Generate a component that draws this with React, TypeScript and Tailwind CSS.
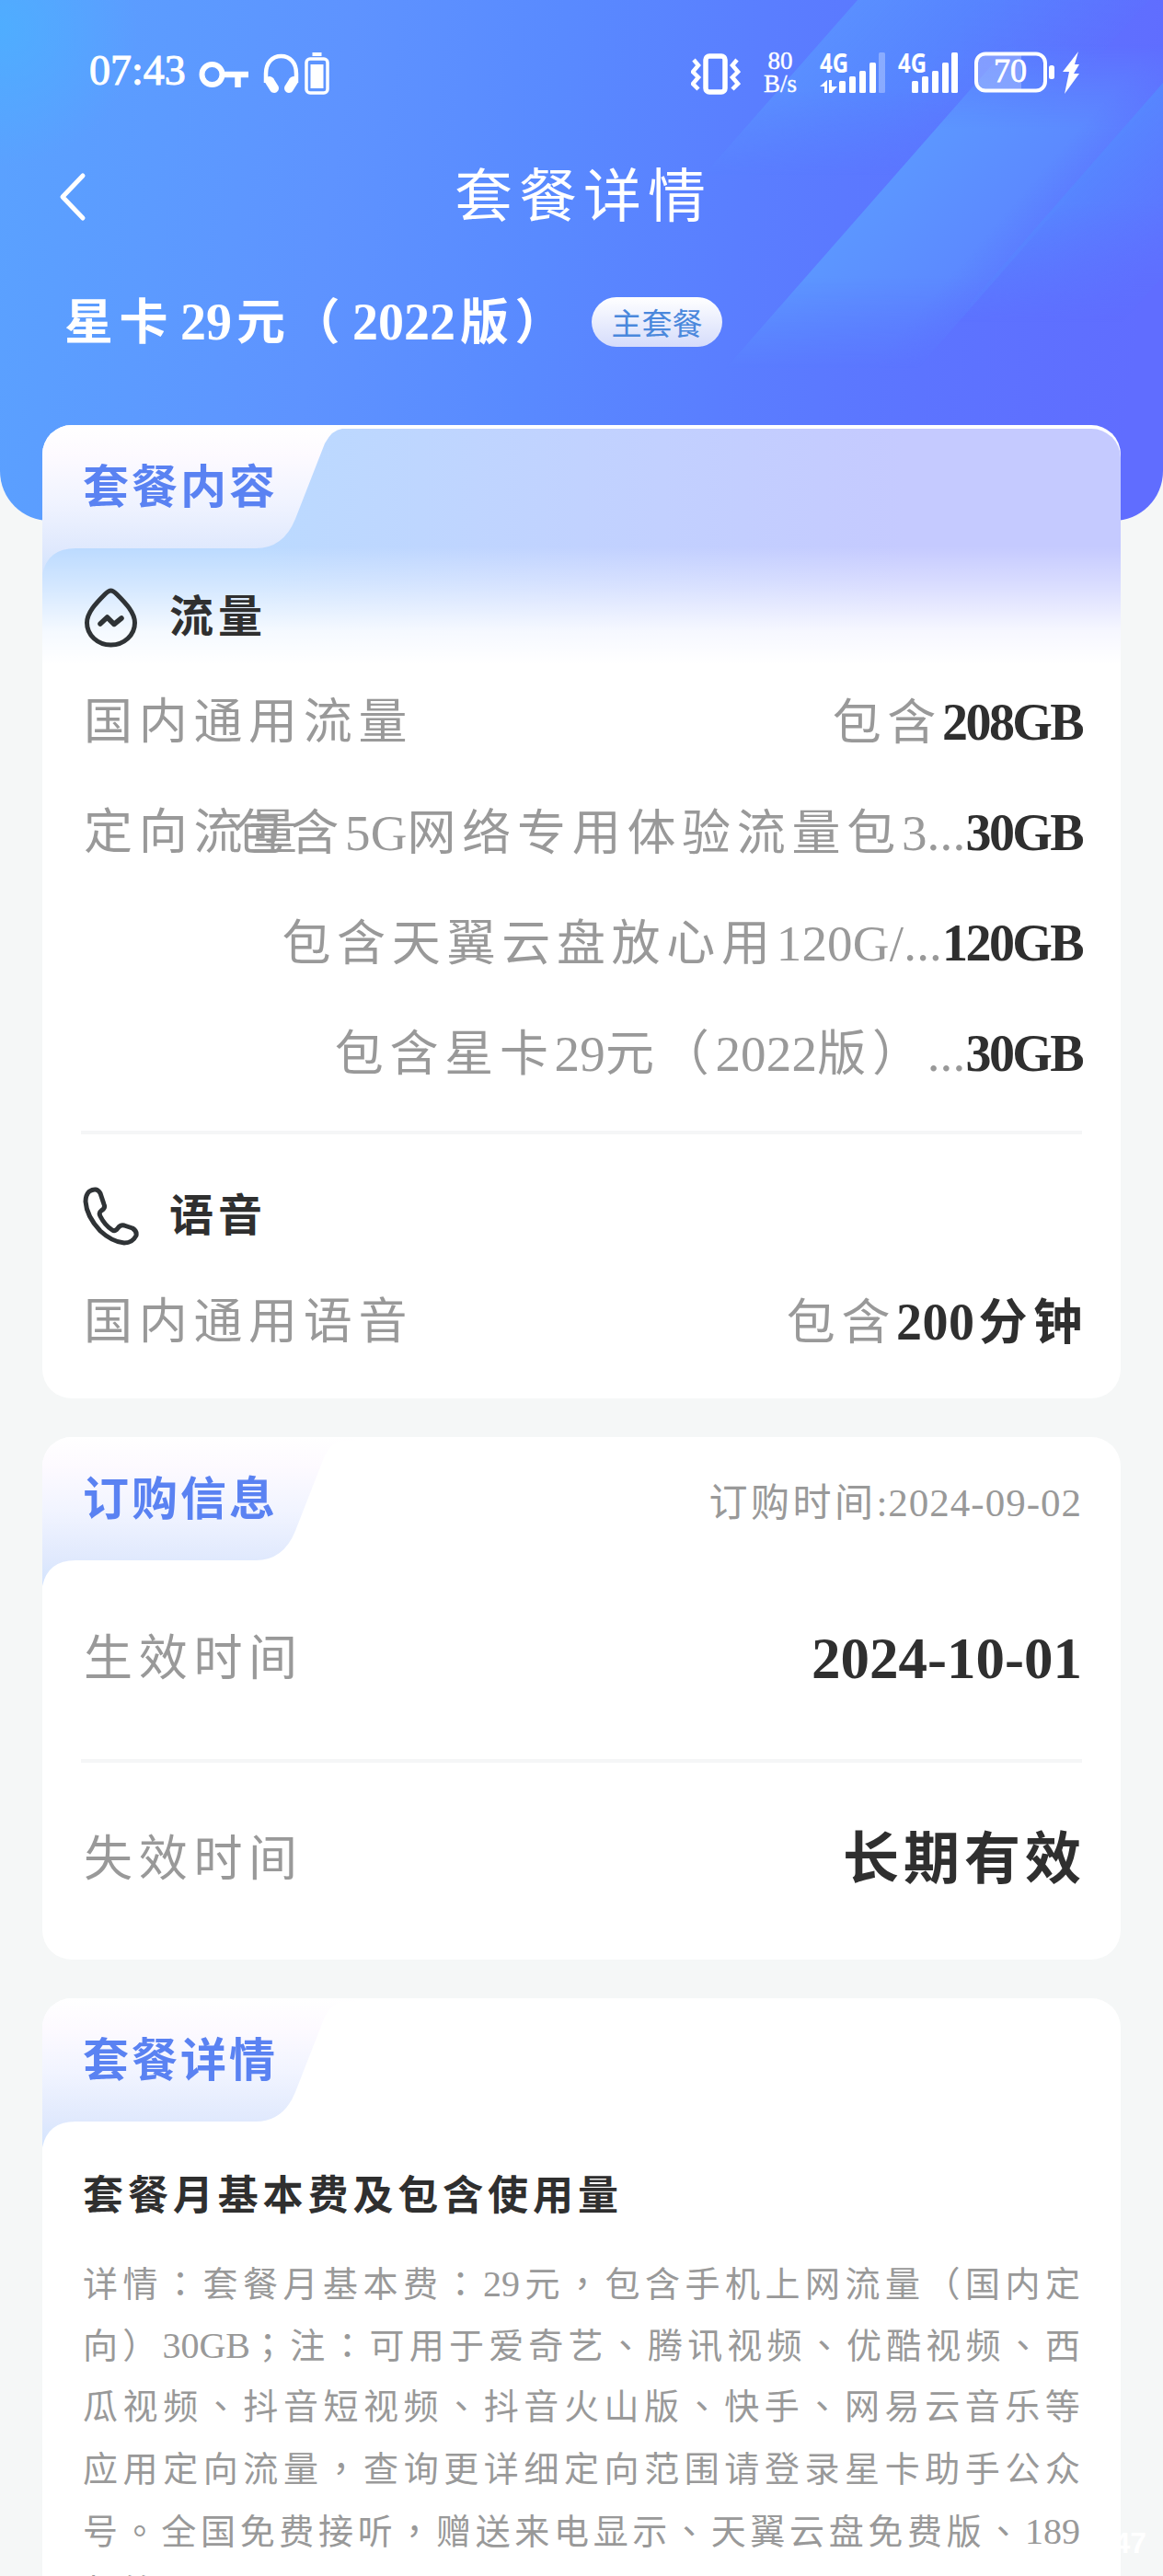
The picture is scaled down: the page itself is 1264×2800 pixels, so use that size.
import { Fragment, ReactNode } from "react"

// Latin runs are set slightly larger and tighter than the Chinese around them,
// and full-width punctuation sits in the middle of its cell
function Mixed({ children, latin = "" }: { children: string; latin?: string }) {
    const parts = children.split(/([\x20-\x7e]+|[，。、：；]+)/).filter(Boolean)
    return (
        <>
            {parts.map((part, i) => {
                if (/^[\x20-\x7e]+$/.test(part)) return <span key={i} className={latin}>{part}</span>
                if (/^[，。、：；]+$/.test(part)) return <span key={i} lang="zh-TW" className="font-['Noto_Sans_CJK_TC',sans-serif] leading-none">{part}</span>
                return <Fragment key={i}>{part}</Fragment>
            })}
        </>
    )
}

function HeaderArt() {
    return (
        <svg className="absolute inset-0 h-full w-full" viewBox="0 0 1264 566" preserveAspectRatio="none">
            <defs>
                <linearGradient id="base" x1="0" y1="0" x2="1264" y2="160" gradientUnits="userSpaceOnUse">
                    <stop offset="0" stopColor="#5aa2ff" />
                    <stop offset="0.3" stopColor="#5e93ff" />
                    <stop offset="0.48" stopColor="#598aff" />
                    <stop offset="0.65" stopColor="#5a7eff" />
                    <stop offset="0.82" stopColor="#5c74ff" />
                    <stop offset="1" stopColor="#606dff" />
                </linearGradient>
                <radialGradient id="corner" cx="0" cy="30" r="150" gradientUnits="userSpaceOnUse">
                    <stop offset="0" stopColor="#4cb0ff" stopOpacity="0.8" />
                    <stop offset="1" stopColor="#4cb0ff" stopOpacity="0" />
                </radialGradient>
                <linearGradient id="beam1" x1="870" y1="70" x2="1060" y2="237" gradientUnits="userSpaceOnUse">
                    <stop offset="0" stopColor="#5a8fff" />
                    <stop offset="0.4" stopColor="#5688ff" stopOpacity="0.8" />
                    <stop offset="1" stopColor="#5880ff" stopOpacity="0" />
                </linearGradient>
                <linearGradient id="beam2" x1="930" y1="240" x2="1090" y2="380" gradientUnits="userSpaceOnUse">
                    <stop offset="0" stopColor="#5c96ff" />
                    <stop offset="0.55" stopColor="#5c8aff" />
                    <stop offset="1" stopColor="#5a80ff" stopOpacity="0" />
                </linearGradient>
                <linearGradient id="beam3" x1="1150" y1="200" x2="1250" y2="290" gradientUnits="userSpaceOnUse">
                    <stop offset="0" stopColor="#5688ff" />
                    <stop offset="1" stopColor="#5a7cff" stopOpacity="0.5" />
                </linearGradient>
                <linearGradient id="fadeDown" x1="0" y1="0" x2="0" y2="1">
                    <stop offset="0.5" stopColor="#fff" />
                    <stop offset="1" stopColor="#000" />
                </linearGradient>
                <linearGradient id="fadeBoth" x1="0" y1="0" x2="0" y2="1">
                    <stop offset="0.12" stopColor="#000" />
                    <stop offset="0.35" stopColor="#fff" />
                    <stop offset="0.75" stopColor="#fff" />
                    <stop offset="1" stopColor="#000" />
                </linearGradient>
                <mask id="beam1Mask">
                    <rect x="700" y="0" width="564" height="190" fill="url(#fadeDown)" />
                </mask>
                <mask id="beam2Mask">
                    <rect x="700" y="0" width="564" height="400" fill="url(#fadeBoth)" />
                </mask>
                <mask id="beam3Mask">
                    <rect x="900" y="90" width="364" height="260" fill="url(#fadeDown)" />
                </mask>
            </defs>
            <rect width="1264" height="566" fill="url(#base)" />
            <rect width="300" height="260" fill="url(#corner)" />
            <path d="M932 0H1249L1082 190H765Z" fill="url(#beam1)" mask="url(#beam1Mask)" />
            <path d="M1140 0H1264V96L998 400H789Z" fill="url(#beam2)" mask="url(#beam2Mask)" />
            <path d="M1264 90V300L1220 350H1036Z" fill="url(#beam3)" mask="url(#beam3Mask)" />
        </svg>
    )
}

function StatusBar() {
    return (
        <div className="flex h-[160px] items-start justify-between pl-[97px] pr-[90px] pt-[54px] text-white">
            <div className="flex items-center">
                <span className="relative -top-[2px] w-[119px] text-[46px] leading-[44px] [-webkit-text-stroke:1px_white]">07:43</span>
                <svg className="h-[50px] w-[146px]" viewBox="216 54 146 50" fill="none" stroke="white">
                    <ellipse cx="230.500" cy="81" rx="11" ry="11" strokeWidth="6" />
                    <path d="M242 81H270M258.500 81V95" strokeWidth="6.500" />
                    <path d="M289 90V80C289 68 296 61 305.500 61S322 68 322 80V90" strokeWidth="4.500" />
                    <path d="M293 88L298 96" strokeWidth="10" strokeLinecap="round" />
                    <path d="M319 88L314 96" strokeWidth="10" strokeLinecap="round" />
                    <rect x="333" y="64" width="23" height="37" rx="4" strokeWidth="3.500" />
                    <rect x="337.500" y="70" width="14" height="26" fill="white" stroke="none" />
                    <rect x="339.500" y="57" width="10" height="4" fill="white" stroke="none" />
                </svg>
            </div>
            <div className="flex items-start">
                <svg className="h-[50px] w-[54px]" viewBox="752 54 54 50" fill="none" stroke="white">
                    <rect x="768" y="61" width="21" height="39" rx="4" strokeWidth="5.500" />
                    <path d="M755 65L760 71L754 78L760 84L754 91L760 97" strokeWidth="4.500" />
                    <path d="M802 65L797 71L803 78L797 84L803 91L797 97" strokeWidth="4.500" />
                </svg>
                <div className="ml-[24px] mr-[23px] w-[38px] text-center text-[27px] leading-[25px] [-webkit-text-stroke:0.4px_white]">
                    <div>80</div>
                    <div>B/s</div>
                </div>
                <svg className="h-[50px] w-[284px] overflow-visible" viewBox="890 54 284 50" fill="white">
                    <text x="891" y="79" fontSize="28" fontWeight="700" fontFamily="Open Sans, sans-serif" textLength="31" lengthAdjust="spacingAndGlyphs">4G</text>
                    <path d="M891 94L899 87V101H896V94ZM901 87H904V94L910 94L904 101H901Z" />
                    <rect x="912" y="88" width="7" height="13" rx="1.500" />
                    <rect x="923" y="83" width="7" height="18" rx="1.500" />
                    <rect x="934" y="77" width="7" height="24" rx="1.500" />
                    <rect x="945" y="68" width="7" height="33" rx="1.500" />
                    <rect x="955" y="57" width="7" height="44" rx="1.500" opacity="0.3" />
                    <text x="976" y="79" fontSize="28" fontWeight="700" fontFamily="Open Sans, sans-serif" textLength="31" lengthAdjust="spacingAndGlyphs">4G</text>
                    <rect x="991" y="88" width="7" height="13" rx="1.500" />
                    <rect x="1002" y="83" width="7" height="18" rx="1.500" />
                    <rect x="1013" y="77" width="7" height="24" rx="1.500" />
                    <rect x="1024" y="68" width="7" height="33" rx="1.500" />
                    <rect x="1034" y="57" width="7" height="44" rx="1.500" />
                    <path d="M1071 59H1110V98H1071Q1061 98 1061 88V69Q1061 59 1071 59Z" opacity="0.25" />
                    <rect x="1061" y="58.500" width="75" height="40" rx="10" fill="none" stroke="white" strokeWidth="4" />
                    <text x="1098" y="89" fontSize="36" fontFamily="Liberation Serif, serif" textAnchor="middle" stroke="white" strokeWidth="0.8">70</text>
                    <rect x="1140" y="71" width="6" height="15" rx="2.500" />
                    <path d="M1172 56L1155 78H1162L1157 102L1173 80H1167L1173 70H1168Z" />
                </svg>
            </div>
        </div>
    )
}

function Tab({ children }: { children: string }) {
    return (
        <div className="relative h-[134px] w-[306px]">
            <svg className="absolute left-0 top-0 h-[162px] w-[340px]" viewBox="0 0 340 162">
                <defs>
                    <linearGradient id="tab" x1="0" y1="0" x2="0" y2="1">
                        <stop offset="0" stopColor="#ffffff" />
                        <stop offset="0.2" stopColor="#fdfaff" />
                        <stop offset="0.5" stopColor="#f1f4ff" />
                        <stop offset="0.82" stopColor="#e0e9fd" />
                        <stop offset="1" stopColor="#d3e4fe" />
                    </linearGradient>
                </defs>
                <path d="M0 0H340V4H326Q315 5 307 20L275 102Q262 134 232 134H36Q6 134 0 162Z" fill="url(#tab)" />
            </svg>
            <h2 className="relative pl-[44px] text-[50px] font-bold leading-[136px] tracking-[3px] text-[#5a82f2]">
                {children}
            </h2>
        </div>
    )
}

function Row({ label, prefix, value }: { label?: string; prefix?: string; value: string }) {
    const isData = value.endsWith("GB")
    return (
        <div className="flex h-[120px] items-center justify-between pt-[2px] text-[53px] leading-none tracking-[6.700px] text-[#999]">
            {/* long values are allowed to run over the label */}
            <span className="w-0 whitespace-nowrap">{label}</span>
            <span className="whitespace-nowrap">
                {prefix && <Mixed latin="text-[55px] tracking-[0.200px]">{prefix}</Mixed>}
                <b className={isData ? "text-[#2f2f2f]" : "-mr-[7px] text-[#2f2f2f]"}>
                    <Mixed latin={isData ? "text-[56px] tracking-[-2.600px]" : "mr-[4px] text-[56px] tracking-[0.500px]"}>{value}</Mixed>
                </b>
            </span>
        </div>
    )
}

function Group({ icon, children }: { icon: ReactNode; children: string }) {
    return (
        <div className="flex h-[70px] items-center gap-[33px] pl-[2px]">
            {icon}
            <h3 className="text-[48px] font-bold leading-none tracking-[5px] text-[#2f2f2f]">{children}</h3>
        </div>
    )
}

const dropIcon = (
    <svg className="h-[66px] w-[61px]" viewBox="0 0 61 66" fill="none" stroke="#2f3336" strokeWidth="5" strokeLinejoin="round" strokeLinecap="round">
        <path d="M30.500 4Q28 4 24 8C14 18 4.500 28 4.500 39A26 24 0 0 0 56.500 39C56.500 28 47 18 37 8Q33 4 30.500 4Z" />
        <path d="M19 40L26.500 33L34 40.500L42 34" strokeWidth="5.500" />
    </svg>
)

const phoneIcon = (
    <svg className="h-[66px] w-[61px]" viewBox="0 0 61 66" fill="none" stroke="#2f3336" strokeWidth="5" strokeLinejoin="round">
        <path d="M7 6Q15 1 19 8L23 20Q25 24 20 27Q17 29 19 33Q24 43 32 48Q35 50 38 46Q41 42 45 43L54 46Q59 49 58 54Q54 62 45 62Q32 61 19 49Q4 33 3 17Q3 10 7 6Z" />
    </svg>
)

const detailLines = [
    "详情：套餐月基本费：29元，包含手机上网流量（国内定",
    "向）30GB；注：可用于爱奇艺、腾讯视频、优酷视频、西",
    "瓜视频、抖音短视频、抖音火山版、快手、网易云音乐等",
    "应用定向流量，查询更详细定向范围请登录星卡助手公众",
    "号。全国免费接听，赠送来电显示、天翼云盘免费版、189",
]

export default function App() {
    return (
        <div lang="zh-CN" className="relative h-[2800px] w-[1264px] overflow-hidden bg-[#f5f7f7] font-['Liberation_Serif','Noto_Sans_CJK_SC',serif]">
            <div className="absolute inset-x-0 top-0 h-[566px] overflow-hidden rounded-b-[54px]">
                <HeaderArt />
            </div>

            <header className="relative h-[462px]">
                <StatusBar />
                <div className="flex h-[108px] items-center pl-[62px] text-white">
                    <svg className="h-[56px] w-[34px]" viewBox="0 0 34 56" fill="none" stroke="white" strokeWidth="5" strokeLinecap="round" strokeLinejoin="round">
                        <path d="M28 5L6 28L28 51" />
                    </svg>
                    <h1 className="ml-[398px] text-[63px] leading-none tracking-[7px]">套餐详情</h1>
                </div>
                <div className="flex h-[164px] items-center pl-[70px] text-white">
                    <span className="w-[573px] whitespace-nowrap text-[53px] font-bold leading-none tracking-[6.500px]">
                        <Mixed latin="text-[56px] tracking-[0px] ml-[7px] mr-[5px]">星卡29元（2022版）</Mixed>
                    </span>
                    <span className="flex h-[54px] w-[142px] items-center justify-center rounded-full bg-linear-to-b from-white to-[#d5dcfb] font-['Noto_Sans_CJK_SC',sans-serif] text-[33px] leading-none text-[#4a88dc]">
                        主套餐
                    </span>
                </div>
            </header>

            <main className="relative mx-[46px] flex flex-col gap-[42px]">
                <section className="relative h-[1058px] overflow-hidden rounded-[32px] bg-white">
                    <div className="absolute inset-x-0 top-1 h-[256px] rounded-t-[32px] bg-[linear-gradient(to_bottom,transparent_50%,rgba(255,255,255,0.35)_66%,rgba(255,255,255,0.85)_86%,white),linear-gradient(to_right,#bbdaff_20%,#c1d2ff_50%,#c5caff_80%)]" />
                    <Tab>套餐内容</Tab>
                    <div className="relative px-[42px] pt-[40px]">
                        <Group icon={dropIcon}>流量</Group>
                        <div className="mt-[18px] pl-[3px]">
                            <Row label="国内通用流量" prefix="包含" value="208GB" />
                            <Row label="定向流量" prefix="包含5G网络专用体验流量包3..." value="30GB" />
                            <Row prefix="包含天翼云盘放心用120G/..." value="120GB" />
                            <Row prefix="包含星卡29元（2022版）..." value="30GB" />
                        </div>
                        <div className="mt-[25px] h-1 bg-[#f5f6f7]" />
                        <div className="mt-[54px]">
                            <Group icon={phoneIcon}>语音</Group>
                        </div>
                        <div className="mt-[19px] pl-[3px]">
                            <Row label="国内通用语音" prefix="包含" value="200分钟" />
                        </div>
                    </div>
                </section>

                <section className="h-[568px] overflow-hidden rounded-[32px] bg-white">
                    <div className="flex items-center justify-between pr-[42px]">
                        <Tab>订购信息</Tab>
                        <span className="relative top-1 text-[42px] leading-none tracking-[3.500px] text-[#999]">
                            <Mixed latin="text-[43px] tracking-[1px]">订购时间:2024-09-02</Mixed>
                        </span>
                    </div>
                    <div className="px-[42px] text-[53px] leading-none tracking-[6.700px] text-[#999]">
                        <div className="flex h-[216px] items-center justify-between pb-[2px] pl-[3px]">
                            <span>生效时间</span>
                            <b className="text-[63px] tracking-[0px] text-[#2f2f2f]">2024-10-01</b>
                        </div>
                        <div className="h-1 bg-[#f5f6f7]" />
                        <div className="flex h-[210px] items-center justify-between pl-[3px]">
                            <span>失效时间</span>
                            <b className="-mr-1 text-[61px] tracking-[5px] text-[#2f2f2f]">长期有效</b>
                        </div>
                    </div>
                </section>

                <section className="h-[700px] overflow-hidden rounded-t-[32px] bg-white">
                    <Tab>套餐详情</Tab>
                    <div className="px-[44px] pt-[42px]">
                        <h3 className="text-[44px] font-bold leading-[80px] tracking-[4.900px] text-[#2f2f2f]">套餐月基本费及包含使用量</h3>
                        <div className="mt-[21px] text-[38px] leading-[67.200px] text-[#999]">
                            {detailLines.map(line => (
                                <p key={line} className="h-[67.200px] whitespace-nowrap [text-align-last:justify]">
                                    <Mixed latin="text-[40px]">{line}</Mixed>
                                </p>
                            ))}
                            <p className="tracking-[5px]">邮箱</p>
                        </div>
                    </div>
                </section>
            </main>

            <span className="absolute right-[18px] top-[2748px] font-['Liberation_Sans',sans-serif] text-[32px] font-bold leading-none text-white">47</span>
        </div>
    )
}
